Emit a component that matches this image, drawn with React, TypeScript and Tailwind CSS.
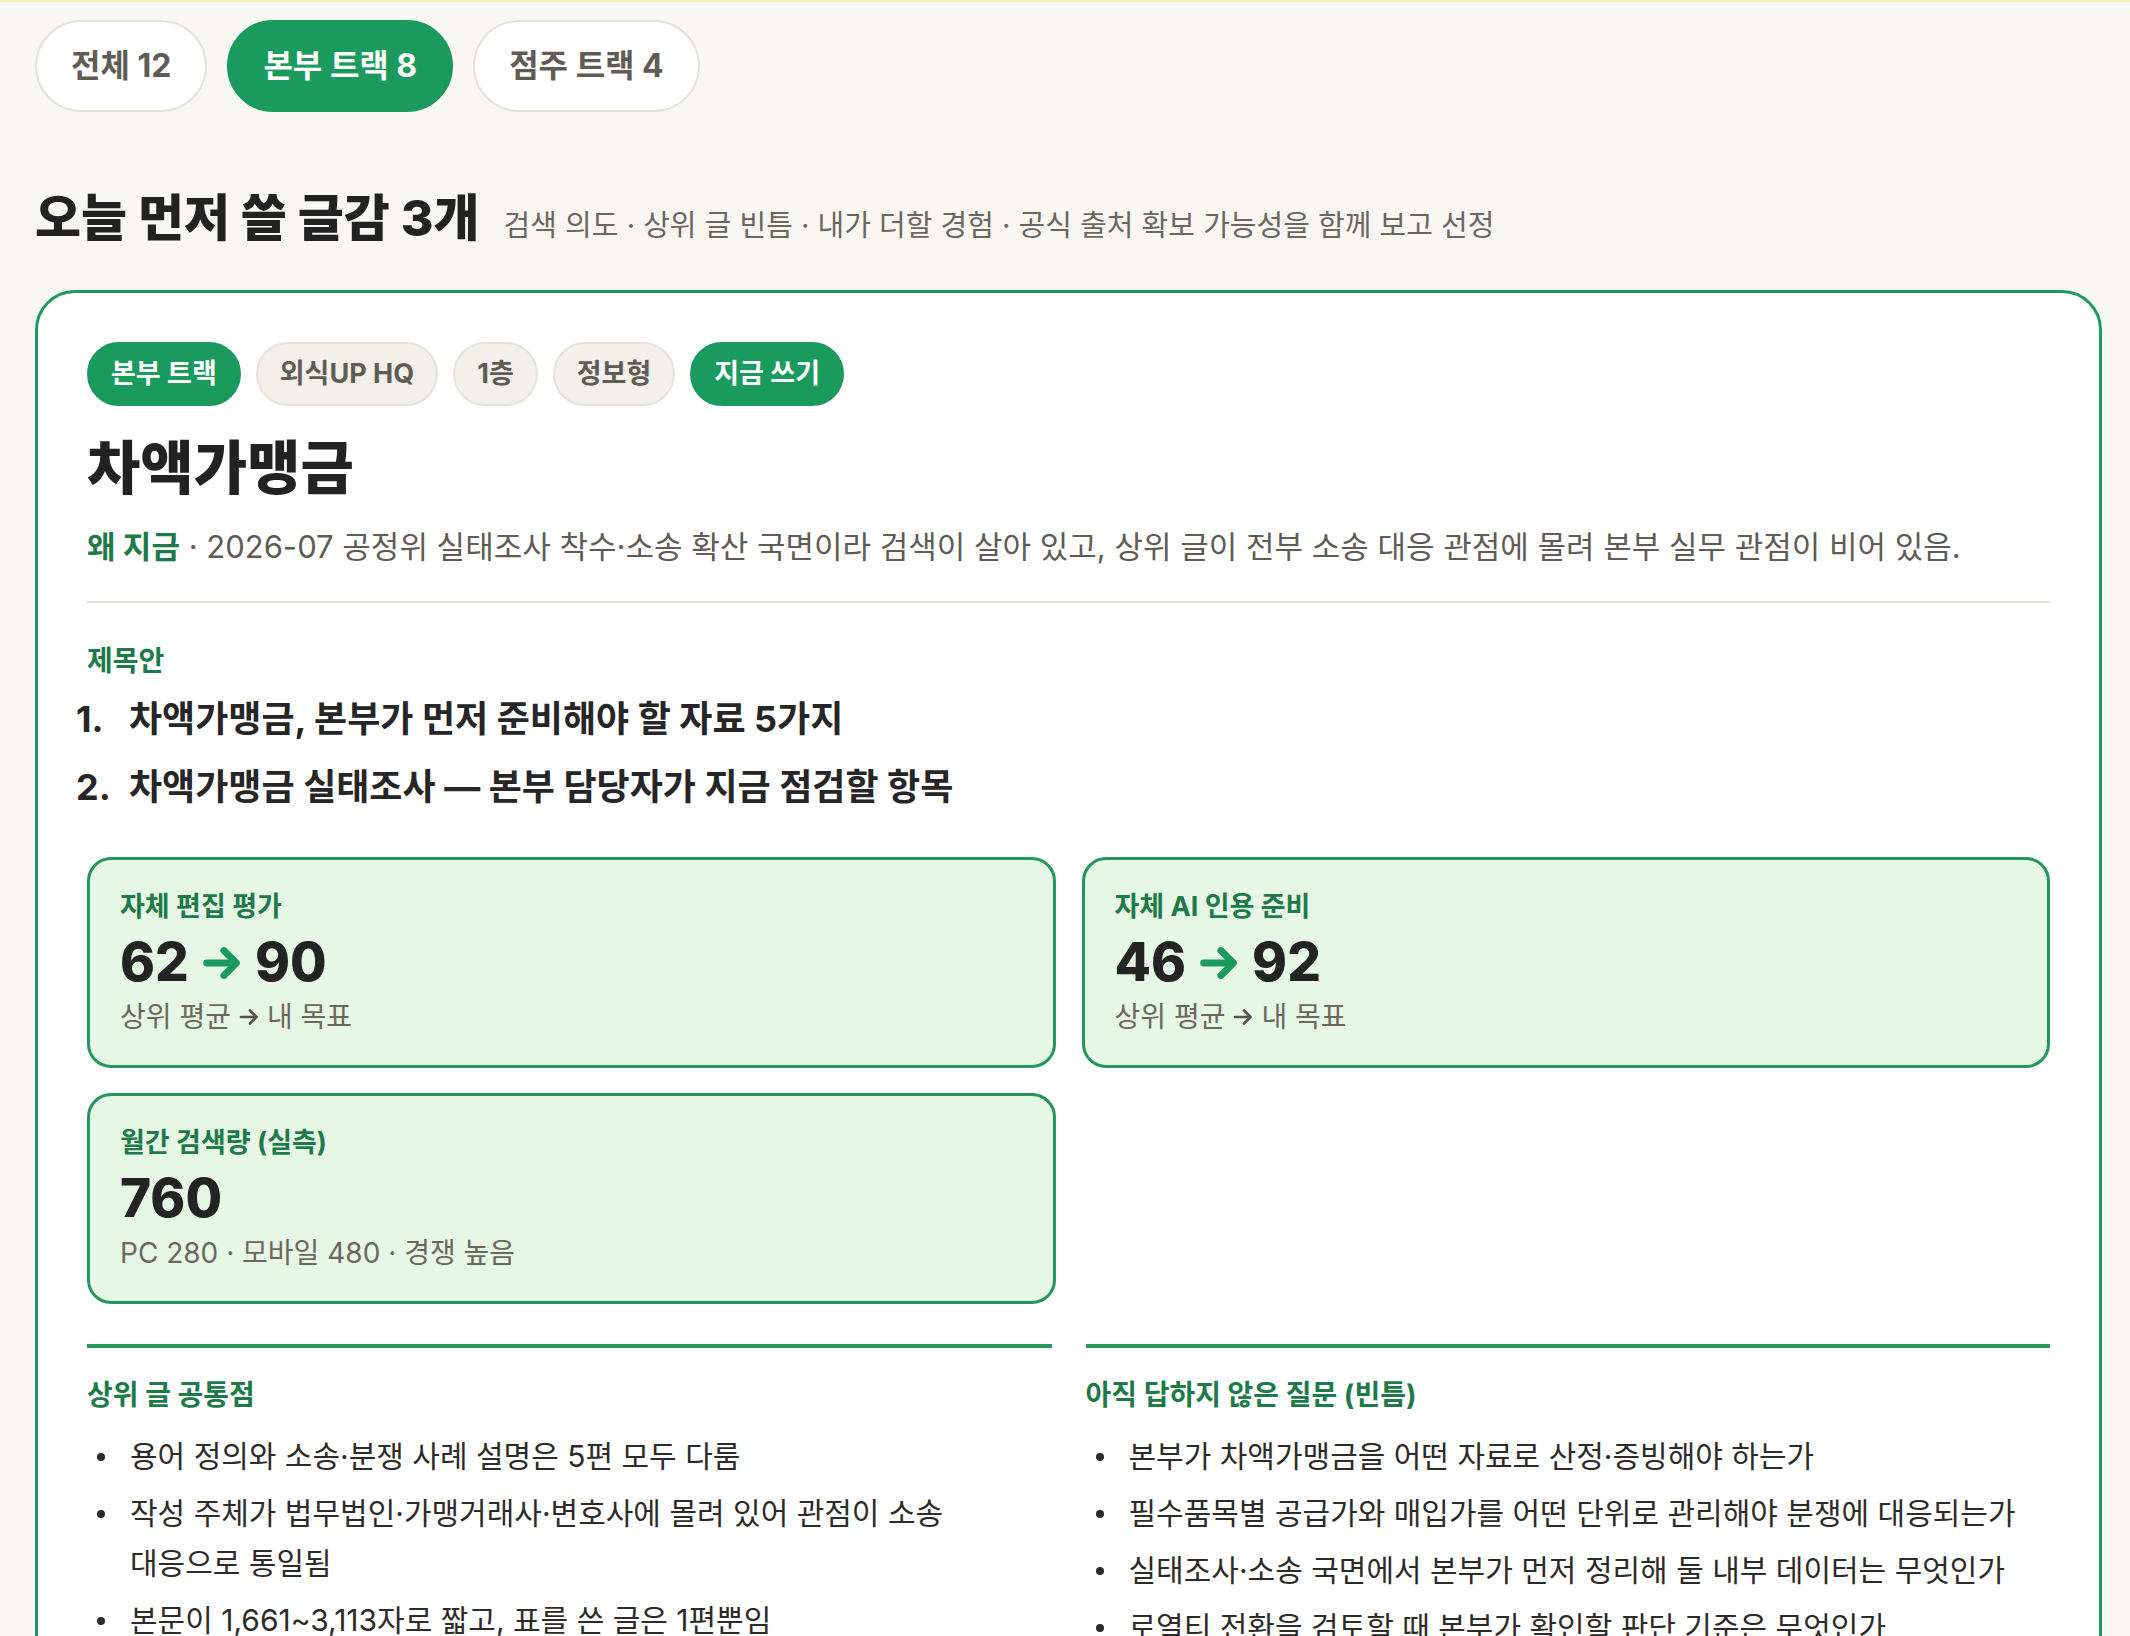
import React from 'react';

const FONT = 'font-["Inter","Noto_Sans_CJK_KR",sans-serif]';

const filters = [
  { label: '전체 12', active: false },
  { label: '본부 트랙 8', active: true },
  { label: '점주 트랙 4', active: false },
];

const tags = [
  { label: '본부 트랙', green: true },
  { label: '외식UP HQ', green: false },
  { label: '1층', green: false },
  { label: '정보형', green: false },
  { label: '지금 쓰기', green: true },
];

const common: React.ReactNode[] = [
  '용어 정의와 소송·분쟁 사례 설명은 5편 모두 다룸',
  <>
    작성 주체가 법무법인·가맹거래사·변호사에 몰려 있어 관점이 소송
    <br />
    대응으로 통일됨
  </>,
  '본문이 1,661~3,113자로 짧고, 표를 쓴 글은 1편뿐임',
];

const gaps: React.ReactNode[] = [
  '본부가 차액가맹금을 어떤 자료로 산정·증빙해야 하는가',
  '필수품목별 공급가와 매입가를 어떤 단위로 관리해야 분쟁에 대응되는가',
  '실태조사·소송 국면에서 본부가 먼저 정리해 둘 내부 데이터는 무엇인가',
  '로열티 전환을 검토할 때 본부가 확인할 판단 기준은 무엇인가',
];

function Arrow({ className, weight = 3.2 }: { className?: string; weight?: number }) {
  return (
    <svg viewBox="0 0 24 24" className={className} fill="none" stroke="currentColor" strokeWidth={weight} strokeLinecap="round" strokeLinejoin="round">
      <path d="M4 12h15" />
      <path d="M13 5.5 19.5 12 13 18.5" />
    </svg>
  );
}

function StatCard({ label, children, sub }: { label: string; children: React.ReactNode; sub: React.ReactNode }) {
  return (
    <div className="bg-[#e7f7e5] border-[3px] border-[#23975c] rounded-[24px] px-[30px] pt-[29px] pb-[30px]">
      <div className="text-[27px] leading-[36px] font-bold text-[#1e7a49]">{label}</div>
      <div className="mt-[4px] text-[53px] leading-[67px] font-extrabold text-[#232323] flex items-center">{children}</div>
      <div className="mt-[3px] text-[28px] leading-[36px] text-[#6b675f] flex items-center">{sub}</div>
    </div>
  );
}

function BulletList({ items }: { items: React.ReactNode[] }) {
  return (
    <ul className="mt-[18px] flex flex-col gap-[7px]">
      {items.map((t, i) => (
        <li key={i} className="flex text-[30px] leading-[50px] text-[#2d2b28]">
          <span className="shrink-0 w-[8px] h-[8px] rounded-full bg-[#2d2b28] ml-[10px] mr-[25px] mt-[22px]" />
          <span className="whitespace-nowrap">{t}</span>
        </li>
      ))}
    </ul>
  );
}

export default function App() {
  return (
    <div className={`${FONT} min-h-screen bg-[#f9f7f2] border-t-[2px] border-[#fcebb8] pl-[35px] pr-[28px] pt-[18px] overflow-hidden`}>
      <div className="flex gap-[20px]">
        {filters.map((f) => (
          <div
            key={f.label}
            className={
              f.active
                ? 'h-[92px] px-[34px] rounded-full bg-[#1b9a5e] border-[2px] border-[#1b9a5e] text-white text-[32px] font-bold flex items-center'
                : 'h-[92px] px-[34px] rounded-full bg-white border-[2px] border-[#e6e2d8] text-[#5f5c56] text-[32px] font-bold flex items-center'
            }
          >
            {f.label}
          </div>
        ))}
      </div>

      <div className="mt-[76px] flex items-baseline gap-[24px]">
        <h2 className="text-[50px] leading-[60px] font-extrabold text-[#222]">오늘 먼저 쓸 글감 3개</h2>
        <span className="text-[29px] text-[#6b675f]">검색 의도 · 상위 글 빈틈 · 내가 더할 경험 · 공식 출처 확보 가능성을 함께 보고 선정</span>
      </div>

      <div className="mt-[42px] bg-white border-[3px] border-[#1c9a5f] rounded-[40px] px-[49px] pt-[49px] pb-[60px]">
        <div className="flex gap-[15px]">
          {tags.map((t) => (
            <span
              key={t.label}
              className={
                t.green
                  ? 'h-[64px] px-[22px] rounded-full bg-[#1b9a5e] border-[2px] border-[#1b9a5e] text-white text-[27px] font-bold flex items-center'
                  : 'h-[64px] px-[22px] rounded-full bg-[#f2f0e9] border-[2px] border-[#e5e2d8] text-[#5f5c56] text-[27px] font-bold flex items-center'
              }
            >
              {t.label}
            </span>
          ))}
        </div>

        <h1 className="mt-[29px] text-[58px] leading-[67px] font-extrabold text-[#222]">차액가맹금</h1>

        <p className="mt-[24px] text-[31px] leading-[41px] text-[#5f5b55]">
          <span className="font-bold text-[#1e7a49]">왜 지금</span> · 2026-07 공정위 실태조사 착수·소송 확산 국면이라 검색이 살아 있고, 상위 글이 전부 소송 대응 관점에 몰려 본부 실무 관점이 비어 있음.
        </p>

        <div className="mt-[34px] h-[2px] bg-[#e5e3d6]" />

        <div className="mt-[40px] text-[28px] leading-[36px] font-bold text-[#1e7a49]">제목안</div>
        <ol className="mt-[15px] flex flex-col gap-[17px] text-[36px] leading-[51px] font-bold text-[#262626]">
          <li className="flex -ml-[11px]">
            <span className="w-[53px] shrink-0">1.</span>
            <span>차액가맹금, 본부가 먼저 준비해야 할 자료 5가지</span>
          </li>
          <li className="flex -ml-[11px]">
            <span className="w-[53px] shrink-0">2.</span>
            <span>차액가맹금 실태조사 — 본부 담당자가 지금 점검할 항목</span>
          </li>
        </ol>

        <div className="mt-[44px] grid grid-cols-2 gap-x-[26px] gap-y-[25px]">
          <StatCard
            label="자체 편집 평가"
            sub={
              <>
                상위 평균 <Arrow weight={2.6} className="w-[24px] h-[24px] mx-[6px] text-[#55524c]" /> 내 목표
              </>
            }
          >
            62 <Arrow weight={3.6} className="w-[46px] h-[46px] mx-[10px] text-[#1b9a5e]" /> 90
          </StatCard>
          <StatCard
            label="자체 AI 인용 준비"
            sub={
              <>
                상위 평균 <Arrow weight={2.6} className="w-[24px] h-[24px] mx-[6px] text-[#55524c]" /> 내 목표
              </>
            }
          >
            46 <Arrow weight={3.6} className="w-[46px] h-[46px] mx-[10px] text-[#1b9a5e]" /> 92
          </StatCard>
          <StatCard label="월간 검색량 (실측)" sub="PC 280 · 모바일 480 · 경쟁 높음">
            760
          </StatCard>
        </div>

        <div className="mt-[40px] grid grid-cols-2 gap-x-[34px]">
          <div>
            <div className="h-[4px] bg-[#249a5c]" />
            <div className="mt-[29px] text-[28px] leading-[36px] font-bold text-[#1e7a49]">상위 글 공통점</div>
            <BulletList items={common} />
          </div>
          <div>
            <div className="h-[4px] bg-[#249a5c]" />
            <div className="mt-[29px] text-[28px] leading-[36px] font-bold text-[#1e7a49]">아직 답하지 않은 질문 (빈틈)</div>
            <BulletList items={gaps} />
          </div>
        </div>
      </div>
    </div>
  );
}
